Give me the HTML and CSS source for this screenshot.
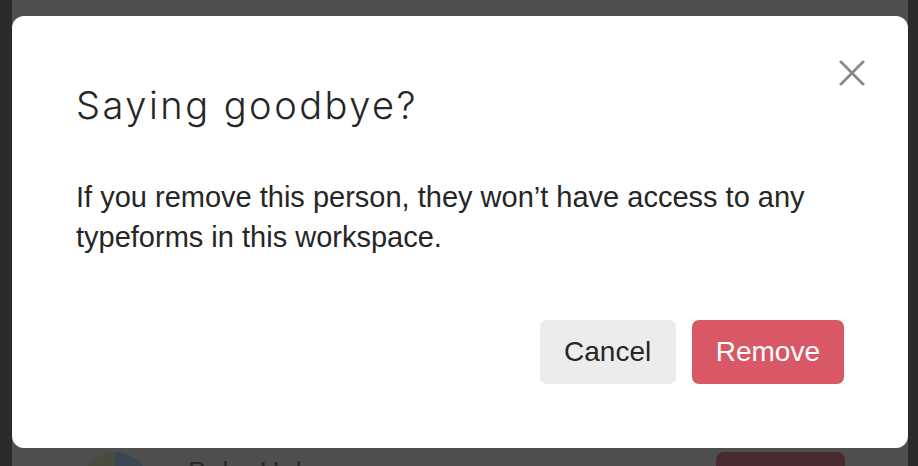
FILE: index.html
```html
<!DOCTYPE html>
<html lang="en">
<head>
<meta charset="utf-8">
<title>Saying goodbye?</title>
<link rel="stylesheet" href="styles.css">
</head>
<body>
<div class="page">
  <div class="member-row">
    <div class="avatar"></div>
    <div class="member-name">Bake Hub</div>
    <div class="member-action"></div>
  </div>
</div>
<div class="modal" role="dialog" aria-labelledby="modal-title">
  <button class="close" aria-label="Close">
    <svg width="28" height="28" viewBox="0 0 28 28" aria-hidden="true">
      <path d="M2 2 L26 26 M26 2 L2 26" stroke="#8a8a8a" stroke-width="3" stroke-linecap="round" fill="none"/>
    </svg>
  </button>
  <h1 class="modal-title" id="modal-title">Saying goodbye?</h1>
  <p class="modal-text">If you remove this person, they won’t have access to any typeforms in this workspace.</p>
  <div class="modal-actions">
    <button class="btn btn-cancel">Cancel</button>
    <button class="btn btn-remove">Remove</button>
  </div>
</div>
</body>
</html>
```
FILE: styles.css
```css
html, body {
  margin: 0;
  padding: 0;
  height: 100%;
  overflow: hidden;
}
body {
  background: #2b2b2b;
  font-family: "Liberation Sans", Arial, sans-serif;
  position: relative;
}
.page {
  margin: 0 10px 0 12px;
  height: 100%;
  background: #4f4f4f;
  padding-top: 452px;
  box-sizing: border-box;
  overflow: hidden;
}
.member-row {
  display: flex;
  align-items: flex-start;
  padding-left: 68px;
  padding-right: 63px;
}
.avatar {
  width: 70px;
  height: 70px;
  border-radius: 50%;
  background: conic-gradient(#3b4653 0deg 150deg, #484b3e 150deg 360deg);
  flex: none;
}
.member-name {
  margin-left: 38px;
  margin-top: 4px;
  font-size: 28px;
  line-height: 32px;
  color: #2a2a2a;
  flex: 1;
}
.member-action {
  width: 129px;
  height: 40px;
  border-radius: 8px;
  background: #472b30;
}
.modal {
  position: absolute;
  left: 12px;
  top: 16px;
  width: 896px;
  height: 432px;
  box-sizing: border-box;
  background: #ffffff;
  border-radius: 12px;
  padding: 67px 64px 64px 64px;
  display: flex;
  flex-direction: column;
}
.close {
  position: absolute;
  top: 44px;
  right: 43px;
  width: 26px;
  height: 26px;
  padding: 0;
  border: 0;
  background: none;
  display: flex;
  align-items: center;
  justify-content: center;
}
.close svg {
  width: 26px;
  height: 26px;
}
.modal-title {
  margin: 0;
  font-family: Inter, Lato, sans-serif;
  font-weight: 300;
  font-size: 38px;
  line-height: 44px;
  letter-spacing: 2.5px;
  color: #262626;
}
.modal-text {
  margin: 50px 0 0 0;
  font-size: 29px;
  line-height: 40px;
  color: #262626;
  max-width: 740px;
}
.modal-actions {
  margin-top: auto;
  display: flex;
  justify-content: flex-end;
  gap: 16px;
}
.btn {
  height: 64px;
  padding: 0 24px;
  border: 0;
  border-radius: 7px;
  font-family: "Liberation Sans", Arial, sans-serif;
  font-size: 28px;
}
.btn-cancel {
  background: #ececec;
  color: #262626;
  padding: 0 24.5px;
}
.btn-remove {
  background: #d95867;
  color: #ffffff;
}
```
